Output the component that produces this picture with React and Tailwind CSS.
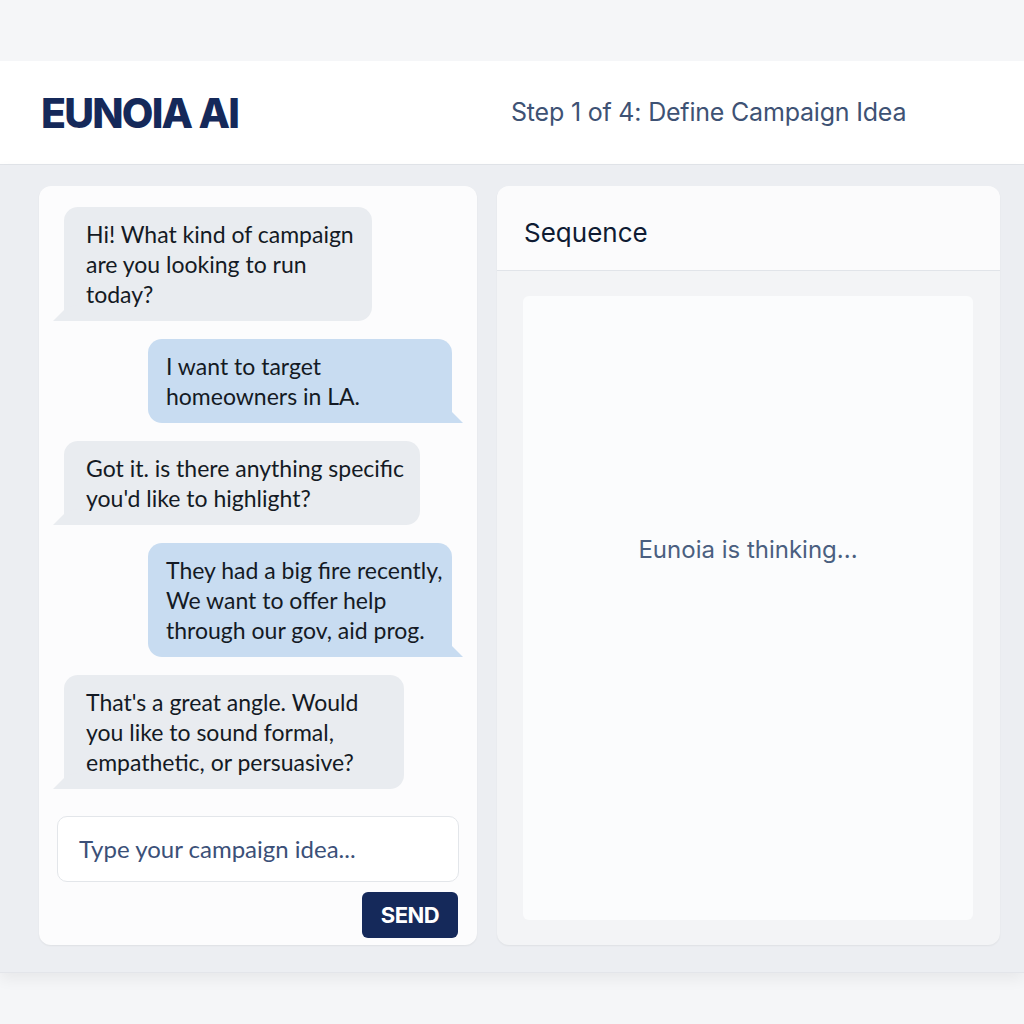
import React from "react";

function Tail({ side, color }) {
  if (side === "left") {
    return (
      <svg className="absolute bottom-0 left-[-11px]" width="24" height="16" viewBox="0 0 24 16">
        <path d="M0 16 L14 2 L24 0 L24 16 Z" fill={color} />
      </svg>
    );
  }
  return (
    <svg className="absolute bottom-0 right-[-11px]" width="24" height="16" viewBox="0 0 24 16">
      <path d="M24 16 L10 2 L0 0 L0 16 Z" fill={color} />
    </svg>
  );
}

function Bubble({ side, width, lines }) {
  const isLeft = side === "left";
  const color = isLeft ? "#e9ecf0" : "#c8dcf1";
  return (
    <div className={isLeft ? "flex justify-start" : "flex justify-end"}>
      <div
        className={
          isLeft
            ? "relative pl-[22px] pr-3 py-[12px] text-[23px] leading-[30px] text-[#141a24] bg-[#e9ecf0] rounded-[14px] rounded-bl-none"
            : "relative pl-[18px] pr-2 py-[12px] text-[23px] leading-[30px] text-[#141a24] bg-[#c8dcf1] rounded-[14px] rounded-br-none"
        }
        style={{ width }}
      >
        {lines.map((l, i) => (
          <div key={i} className="whitespace-nowrap">{l}</div>
        ))}
        <Tail side={side} color={color} />
      </div>
    </div>
  );
}

export default function App() {
  return (
    <div className="w-[1024px] h-[1024px] bg-[#f5f6f8] flex flex-col font-['Inter',sans-serif]">
      <div className="h-[61px]" />
      <header className="h-[104px] bg-white border-b border-[#e1e4e9] flex items-center px-[41px]">
        <div className="w-[470px] text-[41px] font-extrabold tracking-[-1.8px] text-[#15295a] pt-[2px]">EUNOIA AI</div>
        <div className="text-[25px] text-[#3e5274] tracking-[-0.2px]">Step 1 of 4: Define Campaign Idea</div>
      </header>
      <main className="h-[808px] bg-[#eceef2] shadow-[0_6px_14px_rgba(0,0,0,0.06)] flex gap-[20px] pl-[39px] pr-[24px] pt-[21px] pb-[27px] border-b border-[#e3e5ea]">
        <section className="w-[438px] bg-[#fcfcfd] rounded-[12px] shadow-[0_1px_2px_rgba(0,0,0,0.06)] flex flex-col pt-[21px] pb-[7px] font-['Lato',sans-serif]">
          <div className="flex flex-col gap-[18px] px-[25px]">
            <Bubble side="left" width={308} lines={["Hi! What kind of campaign", "are you looking to run", "today?"]} />
            <Bubble side="right" width={304} lines={["I want to target", "homeowners in LA."]} />
            <Bubble side="left" width={356} lines={["Got it. is there anything specific", "you'd like to highlight?"]} />
            <Bubble side="right" width={304} lines={["They had a big fire recently,", "We want to offer help", "through our gov, aid prog."]} />
            <Bubble side="left" width={340} lines={["That's a great angle. Would", "you like to sound formal,", "empathetic, or persuasive?"]} />
          </div>
          <div className="mt-auto px-[18px] flex flex-col items-end gap-[10px]">
            <div className="w-full h-[66px] bg-white border border-[#e3e6ea] rounded-[10px] flex items-center px-[21px] text-[24px] text-[#3b5078]">
              Type your campaign idea...
            </div>
            <button className="w-[96px] h-[46px] mr-[1px] bg-[#15295a] rounded-[6px] text-white text-[22px] font-bold font-['Inter',sans-serif] tracking-[-0.5px]">
              SEND
            </button>
          </div>
        </section>
        <section className="flex-1 bg-[#f3f4f6] rounded-[12px] shadow-[0_1px_2px_rgba(0,0,0,0.06)] flex flex-col overflow-hidden">
          <div className="h-[85px] bg-[#fbfbfc] border-b border-[#e1e4e9] flex items-center px-[27px] pt-[8px] text-[26px] text-[#0f1b33]">
            Sequence
          </div>
          <div className="flex-1 pl-[26px] pr-[27px] pt-[25px] pb-[25px] flex">
            <div className="flex-1 bg-[#fbfcfd] rounded-[6px] flex justify-center pt-[236px] text-[24px] text-[#4a5f80]">
              Eunoia is thinking...
            </div>
          </div>
        </section>
      </main>
    </div>
  );
}
